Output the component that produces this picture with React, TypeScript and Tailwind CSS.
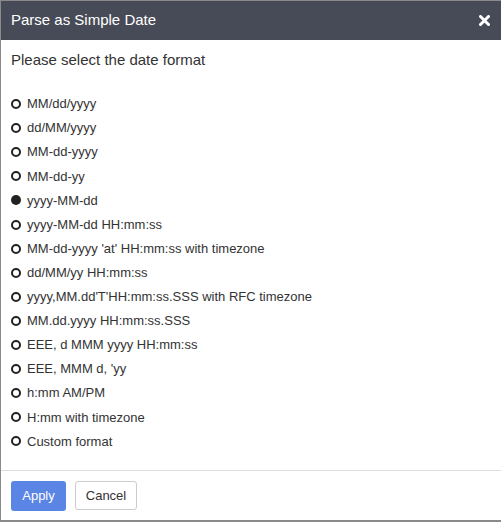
const formats = [
  "MM/dd/yyyy",
  "dd/MM/yyyy",
  "MM-dd-yyyy",
  "MM-dd-yy",
  "yyyy-MM-dd",
  "yyyy-MM-dd HH:mm:ss",
  "MM-dd-yyyy 'at' HH:mm:ss with timezone",
  "dd/MM/yy HH:mm:ss",
  "yyyy,MM.dd'T'HH:mm:ss.SSS with RFC timezone",
  "MM.dd.yyyy HH:mm:ss.SSS",
  "EEE, d MMM yyyy HH:mm:ss",
  "EEE, MMM d, 'yy",
  "h:mm AM/PM",
  "H:mm with timezone",
  "Custom format",
];

export default function App() {
  const selected = 4;
  return (
    <div className="w-[501px] h-[522px] bg-[#8a8a8a] pt-px" style={{ fontFamily: '"Liberation Sans", Arial, sans-serif' }}>
      <div className="h-[519px] bg-white border-l border-[#8a8a8a] flex flex-col">
        {/* Header */}
        <div className="h-[39px] bg-[#474b57] flex items-center justify-between pl-[10px] pr-[10px] shrink-0">
          <span className="text-white text-[15px]">Parse as Simple Date</span>
          <svg width="11" height="11" viewBox="0 0 11 11" className="mr-px">
            <path d="M1.5 1.5 L9.5 9.5 M9.5 1.5 L1.5 9.5" stroke="white" strokeWidth="3" strokeLinecap="round" />
          </svg>
        </div>

        {/* Body */}
        <div className="flex-1 px-[10px]">
          <p className="text-[15px] text-[#333] mt-[11px] leading-[18px]">Please select the date format</p>
          <div className="mt-[23px] flex flex-col">
            {formats.map((f, i) => (
              <label key={i} className="flex items-center h-[24.1px] gap-[6px] text-[13px] text-[#333]">
                {i === selected ? (
                  <span className="w-[10px] h-[10px] rounded-full bg-[#222] shrink-0" />
                ) : (
                  <span className="w-[10px] h-[10px] rounded-full border-2 border-[#222] shrink-0" />
                )}
                <span>{f}</span>
              </label>
            ))}
          </div>
        </div>

        {/* Footer */}
        <div className="border-t border-[#ddd] h-[50px] flex items-center gap-[9px] px-[10px] shrink-0">
          <button className="w-[55px] h-[30px] rounded-[3px] bg-[#5b85e4] text-white text-[13px]">Apply</button>
          <button className="w-[62px] h-[29px] rounded-[3px] border border-[#ccc] bg-white text-[#333] text-[13px]">Cancel</button>
        </div>
      </div>
    </div>
  );
}
